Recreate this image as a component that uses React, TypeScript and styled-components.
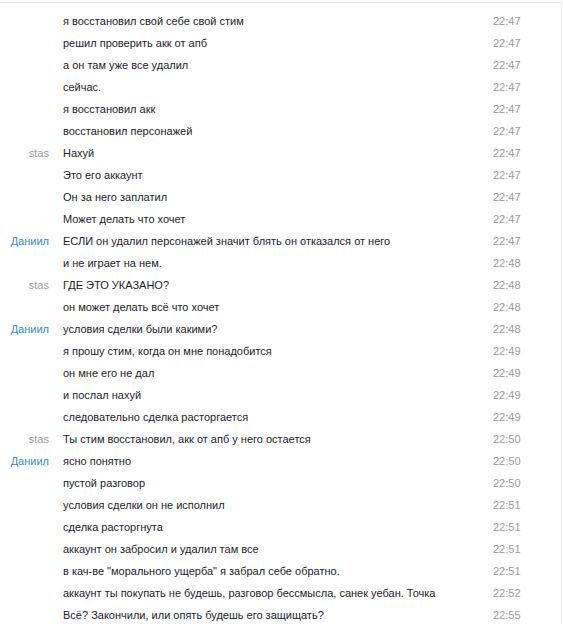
import styled, { createGlobalStyle } from "styled-components";

type Message = {
  author?: "stas" | "Даниил";
  text: string;
  time: string;
};

const messages: Message[] = [
  { text: "я восстановил свой себе свой стим", time: "22:47" },
  { text: "решил проверить акк от апб", time: "22:47" },
  { text: "а он там уже все удалил", time: "22:47" },
  { text: "сейчас.", time: "22:47" },
  { text: "я восстановил акк", time: "22:47" },
  { text: "восстановил персонажей", time: "22:47" },
  { author: "stas", text: "Нахуй", time: "22:47" },
  { text: "Это его аккаунт", time: "22:47" },
  { text: "Он за него заплатил", time: "22:47" },
  { text: "Может делать что хочет", time: "22:47" },
  { author: "Даниил", text: "ЕСЛИ он удалил персонажей значит блять он отказался от него", time: "22:47" },
  { text: "и не играет на нем.", time: "22:48" },
  { author: "stas", text: "ГДЕ ЭТО УКАЗАНО?", time: "22:48" },
  { text: "он может делать всё что хочет", time: "22:48" },
  { author: "Даниил", text: "условия сделки были какими?", time: "22:48" },
  { text: "я прошу стим, когда он мне понадобится", time: "22:49" },
  { text: "он мне его не дал", time: "22:49" },
  { text: "и послал нахуй", time: "22:49" },
  { text: "следовательно сделка расторгается", time: "22:49" },
  { author: "stas", text: "Ты стим восстановил, акк от апб у него остается", time: "22:50" },
  { author: "Даниил", text: "ясно понятно", time: "22:50" },
  { text: "пустой разговор", time: "22:50" },
  { text: "условия сделки он не исполнил", time: "22:51" },
  { text: "сделка расторгнута", time: "22:51" },
  { text: "аккаунт он забросил и удалил там все", time: "22:51" },
  { text: "в кач-ве \"морального ущерба\" я забрал себе обратно.", time: "22:51" },
  { text: "аккаунт ты покупать не будешь, разговор бессмысла, санек уебан. Точка", time: "22:52" },
  { text: "Всё? Закончили, или опять будешь его защищать?", time: "22:55" },
];

const GlobalStyle = createGlobalStyle`
  html, body {
    margin: 0;
    padding: 0;
    background: #ffffff;
  }
  body {
    font-family: "Liberation Sans", Arial, sans-serif;
    font-size: 11px;
    overflow: hidden;
  }
`;

const ChatLog = styled.div`
  margin-top: 2px;
  width: 562px;
  height: 622px;
  box-sizing: border-box;
  border-top: 1px solid #e6e6e6;
  border-right: 1px solid #eeeeee;
  padding-top: 7px;
  overflow: hidden;
`;

const Row = styled.div`
  display: grid;
  grid-template-columns: 49px 416px auto;
  column-gap: 14px;
  height: 22px;
  align-items: center;
  white-space: nowrap;
`;

const Author = styled.span<{ $who?: string }>`
  text-align: right;
  color: ${(p) => (p.$who === "Даниил" ? "#2f8ad8" : "#9b9b9b")};
`;

const Text = styled.span`
  color: #1c1c28;
  overflow: hidden;
`;

const Time = styled.span`
  color: #9a9a9a;
`;

const App = () => {
  return (
    <>
      <GlobalStyle />
      <ChatLog>
        {messages.map((m, i) => (
          <Row key={i}>
            <Author $who={m.author}>{m.author ?? ""}</Author>
            <Text>{m.text}</Text>
            <Time>{m.time}</Time>
          </Row>
        ))}
      </ChatLog>
    </>
  );
};

export default App;
